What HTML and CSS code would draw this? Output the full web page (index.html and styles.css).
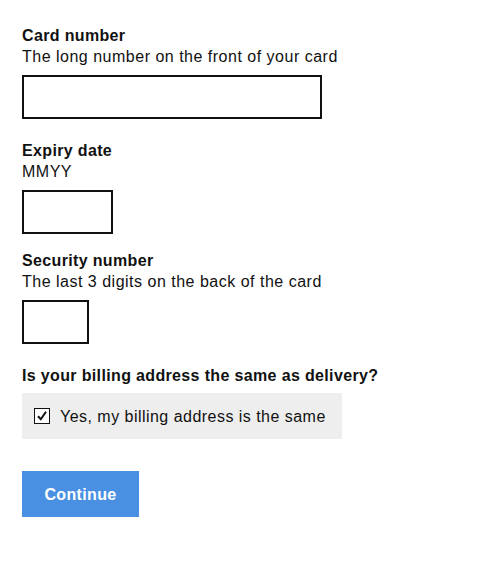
FILE: index.html
```html
<!DOCTYPE html>
<html lang="en">
<head>
<meta charset="utf-8">
<title>Payment</title>
<link rel="stylesheet" href="styles.css">
</head>
<body>
<form class="form">
  <div class="field field-card">
    <label class="label" for="card">Card number</label>
    <span class="hint">The long number on the front of your card</span>
    <input class="input input-card" id="card" type="text">
  </div>
  <div class="field field-expiry">
    <label class="label" for="expiry">Expiry date</label>
    <span class="hint">MMYY</span>
    <input class="input input-expiry" id="expiry" type="text">
  </div>
  <div class="field field-cvc">
    <label class="label" for="cvc">Security number</label>
    <span class="hint">The last 3 digits on the back of the card</span>
    <input class="input input-cvc" id="cvc" type="text">
  </div>
  <fieldset class="question">
    <legend class="label">Is your billing address the same as delivery?</legend>
    <label class="check">
      <span class="box"><svg width="12" height="12" viewBox="0 0 12 12"><path d="M2 6.2 L4.8 9.2 L10 1.8" fill="none" stroke="#111" stroke-width="2"/></svg></span>
      <span class="check-text">Yes, my billing address is the same</span>
    </label>
  </fieldset>
  <button class="btn" type="button">Continue</button>
</form>
</body>
</html>
```

FILE: styles.css
```css
html, body {
  margin: 0;
  padding: 0;
  background: #fff;
}
body {
  font-family: "Liberation Sans", Arial, sans-serif;
  font-size: 16px;
  line-height: 21px;
  color: #111;
  letter-spacing: 0.5px;
}
.form {
  padding: 25px 22px 0;
}
.field-card { margin-bottom: 21px; }
.field-expiry { margin-bottom: 16px; }
.field-cvc { margin-bottom: 21px; }
.label {
  display: block;
  font-weight: bold;
  letter-spacing: 0.35px;
}
.hint {
  display: block;
}
.input {
  display: block;
  box-sizing: border-box;
  height: 44px;
  margin-top: 8px;
  border: 2px solid #111;
  background: #fff;
  padding: 0 8px;
  font: inherit;
  outline: none;
}
.input-card { width: 300px; }
.input-expiry { width: 91px; }
.input-cvc { width: 67px; }
.question {
  border: 0;
  margin: 0;
  padding: 0;
}
.question .label {
  padding: 0;
  margin-bottom: 7px;
}
.check {
  display: flex;
  align-items: center;
  gap: 10px;
  box-sizing: border-box;
  width: 320px;
  height: 46px;
  padding: 0 12px;
  background: #eeeeee;
}
.check-text {
  letter-spacing: 0.47px;
}
.box {
  box-sizing: border-box;
  width: 16px;
  height: 16px;
  border: 1.5px solid #111;
  background: #fff;
  display: flex;
  align-items: center;
  justify-content: center;
}
.btn {
  display: block;
  margin-top: 32px;
  width: 117px;
  height: 46px;
  border: 0;
  background: #4a90e2;
  color: #fff;
  font: inherit;
  font-weight: bold;
  letter-spacing: 0.35px;
  padding: 0;
}
```
